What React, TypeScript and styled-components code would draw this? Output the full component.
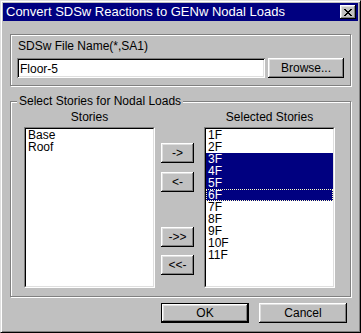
import React from "react";
import styled, { createGlobalStyle, css } from "styled-components";

const Global = createGlobalStyle`
  html, body { margin: 0; padding: 0; background: #c0c0c0; }
  body { font-family: "Liberation Sans", Arial, sans-serif; font-size: 12px; }
  * { box-sizing: border-box; }
`;

const raised = css`
  background: #c0c0c0;
  border: none;
  box-shadow: inset -1px -1px #000, inset 1px 1px #fff, inset -2px -2px #808080,
    inset 2px 2px #dfdfdf;
`;

const Window = styled.div`
  width: 361px;
  height: 333px;
  background: #c0c0c0;
  border: 1px solid;
  border-color: #dfdfdf #000 #000 #dfdfdf;
  box-shadow: inset 1px 1px #fff, inset -1px -1px #808080;
  padding: 2px;
  display: flex;
  flex-direction: column;
  font-family: "Liberation Sans", Arial, sans-serif;
  font-size: 12px;
  color: #000;
`;

const TitleBar = styled.div`
  height: 18px;
  background: #000080;
  color: #fff;
  display: flex;
  align-items: center;
  justify-content: space-between;
  padding: 0 2px 0 3px;
`;

const Title = styled.span`
  font-size: 13px;
  line-height: 18px;
  white-space: nowrap;
`;

const CloseButton = styled.button`
  ${raised};
  width: 16px;
  height: 14px;
  padding: 0;
  display: flex;
  align-items: center;
  justify-content: center;
`;

const Body = styled.div`
  display: flex;
  flex-direction: column;
  padding: 13px 7px 0 7px;
`;

const etched = css`
  border: 1px solid #808080;
  box-shadow: inset 1px 1px 0 #fff, 1px 1px 0 #fff;
`;

const FileGroup = styled.div`
  ${etched};
  height: 52px;
  padding: 4px 6px 0 6px;
  display: flex;
  flex-direction: column;
`;

const FieldLabel = styled.div`
  height: 14px;
  line-height: 14px;
  margin-bottom: 5px;
  padding-left: 1px;
`;

const FieldRow = styled.div`
  display: flex;
  gap: 3px;
`;

const TextInput = styled.input`
  flex: 1;
  height: 20px;
  border: none;
  outline: none;
  background: #fff;
  font: inherit;
  color: #000;
  padding: 2px 3px 0 3px;
  box-shadow: inset 1px 1px #808080, inset -1px -1px #fff, inset 2px 2px #000,
    inset -2px -2px #dfdfdf;
`;

const PushButton = styled.button<{ $width: number; $default?: boolean }>`
  ${raised};
  width: ${(p) => p.$width}px;
  height: 20px;
  padding: 0;
  font: inherit;
  color: #000;
  display: flex;
  align-items: center;
  justify-content: center;
  ${(p) =>
    p.$default &&
    css`
      border: 1px solid #000;
      box-shadow: inset -1px -1px #000, inset 1px 1px #fff,
        inset -2px -2px #808080, inset 2px 2px #dfdfdf;
    `}
`;

const StoryGroup = styled.div`
  ${etched};
  position: relative;
  margin-top: 15px;
  height: 196px;
  padding: 8px 0 0 13px;
`;

const Legend = styled.span`
  position: absolute;
  top: -8px;
  left: 6px;
  padding: 0 2px;
  background: #c0c0c0;
  line-height: 14px;
`;

const Columns = styled.div`
  display: flex;
  align-items: flex-start;
`;

const ListColumn = styled.div`
  width: 131px;
  display: flex;
  flex-direction: column;
`;

const ColumnHead = styled.div`
  height: 14px;
  line-height: 14px;
  margin-bottom: 3px;
  text-align: center;
`;

const ListFrame = styled.div`
  height: 161px;
  border: 1px solid;
  border-color: #808080 #fff #fff #808080;
`;

const ListBox = styled.ul`
  height: 100%;
  margin: 0;
  padding: 0;
  list-style: none;
  background: #fff;
  border: 1px solid;
  border-color: #000 #dfdfdf #dfdfdf #000;
`;

const ListItem = styled.li<{ $selected?: boolean; $focused?: boolean }>`
  height: 12px;
  line-height: 12px;
  padding-left: 2px;
  white-space: nowrap;
  background: ${(p) => (p.$selected ? "#000080" : "transparent")};
  color: ${(p) => (p.$selected ? "#fff" : "#000")};
  ${(p) =>
    p.$focused &&
    css`
      outline: 1px dotted #ffffc8;
      outline-offset: -1px;
    `}
`;

const MoveColumn = styled.div`
  width: 33px;
  margin: 0 10px 0 6px;
  padding-top: 33px;
  display: flex;
  flex-direction: column;
`;

const MoveButton = styled(PushButton)<{ $top: number }>`
  margin-top: ${(p) => p.$top}px;
`;

const Footer = styled.div`
  display: flex;
  justify-content: flex-end;
  gap: 10px;
  margin-top: 6px;
  padding-right: 4px;
`;

const CloseGlyph = () => (
  <svg width="8" height="7" viewBox="0 0 8 7" shapeRendering="crispEdges">
    <path
      d="M0 0h2v1h1v1h2v-1h1v-1h2v1h-1v1h-1v1h-1v1h1v1h1v1h1v1h-2v-1h-1v-1h-2v1h-1v1h-2v-1h1v-1h1v-1h1v-1h-1v-1h-1v-1h-1z"
      fill="#000"
    />
  </svg>
);

const available = ["Base", "Roof"];
const selectedStories = ["1F", "2F", "3F", "4F", "5F", "6F", "7F", "8F", "9F", "10F", "11F"];
const highlighted = new Set(["3F", "4F", "5F", "6F"]);

export default function App() {
  return (
    <>
      <Global />
      <Window>
        <TitleBar>
          <Title>Convert SDSw Reactions to GENw Nodal Loads</Title>
          <CloseButton aria-label="Close">
            <CloseGlyph />
          </CloseButton>
        </TitleBar>
        <Body>
          <FileGroup>
            <FieldLabel>SDSw File Name(*,SA1)</FieldLabel>
            <FieldRow>
              <TextInput value="Floor-5" readOnly />
              <PushButton $width={76}>Browse...</PushButton>
            </FieldRow>
          </FileGroup>
          <StoryGroup>
            <Legend>Select Stories for Nodal Loads</Legend>
            <Columns>
              <ListColumn>
                <ColumnHead>Stories</ColumnHead>
                <ListFrame>
                  <ListBox>
                    {available.map((s) => (
                      <ListItem key={s}>{s}</ListItem>
                    ))}
                  </ListBox>
                </ListFrame>
              </ListColumn>
              <MoveColumn>
                <MoveButton $width={33} $top={0}>-&gt;</MoveButton>
                <MoveButton $width={33} $top={9}>&lt;-</MoveButton>
                <MoveButton $width={33} $top={35}>-&gt;&gt;</MoveButton>
                <MoveButton $width={33} $top={8}>&lt;&lt;-</MoveButton>
              </MoveColumn>
              <ListColumn>
                <ColumnHead>Selected Stories</ColumnHead>
                <ListFrame>
                  <ListBox>
                    {selectedStories.map((s) => (
                      <ListItem key={s} $selected={highlighted.has(s)} $focused={s === "6F"}>
                        {s}
                      </ListItem>
                    ))}
                  </ListBox>
                </ListFrame>
              </ListColumn>
            </Columns>
          </StoryGroup>
          <Footer>
            <PushButton $width={88} $default>
              OK
            </PushButton>
            <PushButton $width={88}>Cancel</PushButton>
          </Footer>
        </Body>
      </Window>
    </>
  );
}
